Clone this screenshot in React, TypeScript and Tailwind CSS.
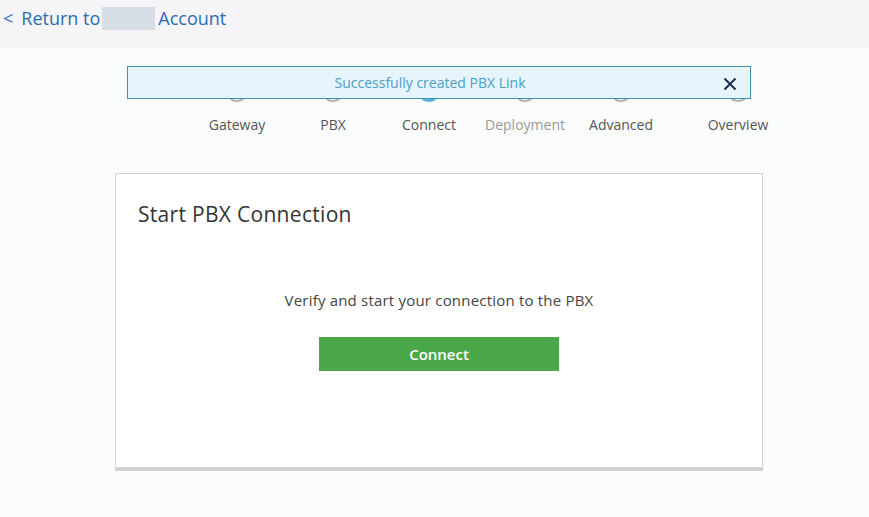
import React from "react";

const steps = [
  { label: "Gateway", w: "w-[96px]", state: "done" },
  { label: "PBX", w: "w-[96px]", state: "done" },
  { label: "Connect", w: "w-[96px]", state: "active" },
  { label: "Deployment", w: "w-[96px]", state: "disabled" },
  { label: "Advanced", w: "w-[96px]", state: "todo" },
  { label: "Overview", w: "w-[138px]", state: "todo" },
];

export default function App() {
  return (
    <div
      className="w-[869px] h-[517px] bg-[#fbfcfc] overflow-hidden relative"
      style={{ fontFamily: '"Open Sans", "Liberation Sans", sans-serif' }}
    >
      <div className="h-[48px] bg-[#f5f4f7] flex items-start pt-[5px] pl-[3px] text-[18px] text-[#2b6db5]">
        <span className="mr-[8px]">&lt;</span>
        <span>Return to</span>
        <span className="inline-block w-[53px] h-[23px] bg-[#d6dee6] ml-[2px] mr-[3px] mt-[2px]" />
        <span>Account</span>
      </div>

      <div className="relative">
        <div className="flex pl-[189px] pt-[32px]">
          {steps.map((s) => (
            <div key={s.label} className={`${s.w} flex flex-col items-center`}>
              <div
                className={
                  s.state === "active"
                    ? "w-[22px] h-[22px] rounded-full bg-[#5ab3df] border-2 border-[#5ab3df]"
                    : "w-[22px] h-[22px] rounded-full bg-white border-2 border-[#b3b3b3]"
                }
              />
              <div
                className={
                  s.state === "disabled"
                    ? "mt-[12px] text-[14px] text-[#9a9a9a]"
                    : "mt-[12px] text-[14px] text-[#555555]"
                }
              >
                {s.label}
              </div>
            </div>
          ))}
        </div>

        <div className="absolute left-[127px] top-[18px] w-[624px] h-[33px] border border-[#3d93b0] bg-[#e6f4fb] flex items-center justify-center pr-[18px]">
          <span className="text-[14px] text-[#4a9fc7] mt-[-1px]">Successfully created PBX Link</span>
          <svg
            className="absolute right-[13px] top-[10px]"
            width="14"
            height="14"
            viewBox="0 0 14 14"
          >
            <path d="M1.5 1.5 L12.5 12.5 M12.5 1.5 L1.5 12.5" stroke="#1f2d4b" strokeWidth="2" />
          </svg>
        </div>
      </div>

      <div className="ml-[115px] mt-[38px] w-[648px] h-[298px] bg-white border border-[#d4d4d4] border-b-[4px] border-b-[#d2d2d2] flex flex-col">
        <div className="pl-[22px] pt-[25px] text-[21px] tracking-[0.3px] text-[#333333]">Start PBX Connection</div>
        <div className="mt-[58px] text-center text-[15px] tracking-[0.2px] text-[#444444]">
          Verify and start your connection to the PBX
        </div>
        <div className="flex justify-center mt-[26px]">
          <button className="w-[240px] h-[34px] bg-[#4aa84b] text-white text-[15px] font-semibold">
            Connect
          </button>
        </div>
      </div>
    </div>
  );
}
